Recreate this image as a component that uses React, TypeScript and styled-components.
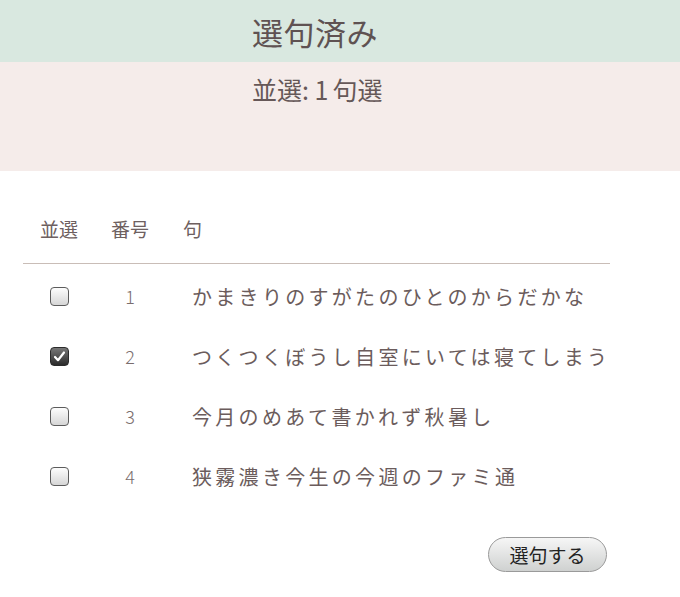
import React, { useState } from "react";
import styled, { createGlobalStyle } from "styled-components";

const GlobalStyle = createGlobalStyle`
	body {
		margin: 0;
		background: #fff;
		font-family: "Noto Sans CJK JP", "Noto Sans", sans-serif;
		color: #6b5c5c;
	}
`;

const Page = styled.main`
	width: 680px;
	min-height: 597px;
`;

const TitleBar = styled.header`
	height: 62px;
	background-color: #d9e8e0;
	display: flex;
	align-items: center;
	padding-left: 252px;
`;

const Title = styled.h1`
	margin: 0;
	font-size: 31px;
	font-weight: 400;
	line-height: 1;
	letter-spacing: 0.5px;
	color: #5f5252;
`;

const Summary = styled.section`
	height: 109px;
	box-sizing: border-box;
	background-color: #f5ecea;
	padding: 12px 0 0 252px;
`;

const SummaryText = styled.p`
	margin: 0;
	font-size: 25px;
	line-height: 30px;
	color: #665858;
`;

const Gap = styled.span`
	display: inline-block;
	width: 4px;
`;

const Table = styled.div`
	margin: 46px 0 0 23px;
	width: 587px;
`;

const HeaderRow = styled.div`
	display: grid;
	grid-template-columns: 72px 70px 1fr;
	padding-bottom: 22px;
	border-bottom: 1px solid #c9bdb7;
	font-size: 19px;
	line-height: 24px;
	color: #6e6060;
`;

const HeadCell = styled.div<{ $left?: boolean }>`
	text-align: ${(p) => (p.$left ? "left" : "center")};
	padding-left: ${(p) => (p.$left ? "18px" : "0")};
`;

const Rows = styled.div`
	padding-top: 2px;
`;

const Row = styled.label`
	display: grid;
	grid-template-columns: 72px 70px 1fr;
	align-items: center;
	height: 60px;
	cursor: pointer;
`;

const BoxCell = styled.div`
	display: flex;
	justify-content: center;
`;

const Box = styled.span<{ $checked: boolean }>`
	width: 17px;
	height: 17px;
	border-radius: 4px;
	border: 1.5px solid ${(p) => (p.$checked ? "#2a2a2a" : "#5c5c5c")};
	background: ${(p) =>
		p.$checked
			? "linear-gradient(#777, #2b2b2b)"
			: "linear-gradient(#fdfdfd, #d6d6d6)"};
	display: flex;
	align-items: center;
	justify-content: center;
`;

const HiddenInput = styled.input`
	display: none;
`;

const Num = styled.div`
	text-align: center;
	font-size: 18px;
	font-weight: 300;
	color: #7a6d6d;
`;

const Haiku = styled.div`
	padding-left: 27px;
	font-size: 20px;
	letter-spacing: 3.3px;
	color: #6b5c5c;
	white-space: nowrap;
`;

const Actions = styled.div`
	display: flex;
	justify-content: flex-end;
	margin-top: 31px;
	padding-right: 3px;
`;

const SubmitButton = styled.button`
	width: 119px;
	height: 35px;
	border-radius: 18px;
	border: 1px solid #9a9a9a;
	background: linear-gradient(#f6f6f6, #cfd1d0);
	font-family: "Noto Sans CJK JP", sans-serif;
	font-size: 19px;
	color: #222;
	cursor: pointer;

	&:focus {
		outline: none;
	}
`;

const Check = () => (
	<svg width="13" height="13" viewBox="0 0 13 13">
		<path
			d="M2 7 L5 10.2 L11 2.5"
			fill="none"
			stroke="#fff"
			strokeWidth="2.2"
			strokeLinecap="round"
			strokeLinejoin="round"
		/>
	</svg>
);

const haikus = [
	"かまきりのすがたのひとのからだかな",
	"つくつくぼうし自室にいては寝てしまう",
	"今月のめあて書かれず秋暑し",
	"狭霧濃き今生の今週のファミ通",
];

const App = () => {
	const [picked, setPicked] = useState<number[]>([1]);

	const toggle = (i: number) =>
		setPicked((p) => (p.includes(i) ? p.filter((x) => x !== i) : [...p, i]));

	return (
		<Page>
			<GlobalStyle />
			<TitleBar>
				<Title>選句済み</Title>
			</TitleBar>
			<Summary>
				<SummaryText>
					並選: {picked.length}
					<Gap />
					句選
				</SummaryText>
			</Summary>
			<Table>
				<HeaderRow>
					<HeadCell>並選</HeadCell>
					<HeadCell>番号</HeadCell>
					<HeadCell $left>句</HeadCell>
				</HeaderRow>
				<Rows>
					{haikus.map((h, i) => {
						const on = picked.includes(i);
						return (
							<Row key={i}>
								<BoxCell>
									<HiddenInput
										type="checkbox"
										checked={on}
										onChange={() => toggle(i)}
									/>
									<Box $checked={on}>{on && <Check />}</Box>
								</BoxCell>
								<Num>{i + 1}</Num>
								<Haiku>{h}</Haiku>
							</Row>
						);
					})}
				</Rows>
				<Actions>
					<SubmitButton>選句する</SubmitButton>
				</Actions>
			</Table>
		</Page>
	);
};

export default App;
